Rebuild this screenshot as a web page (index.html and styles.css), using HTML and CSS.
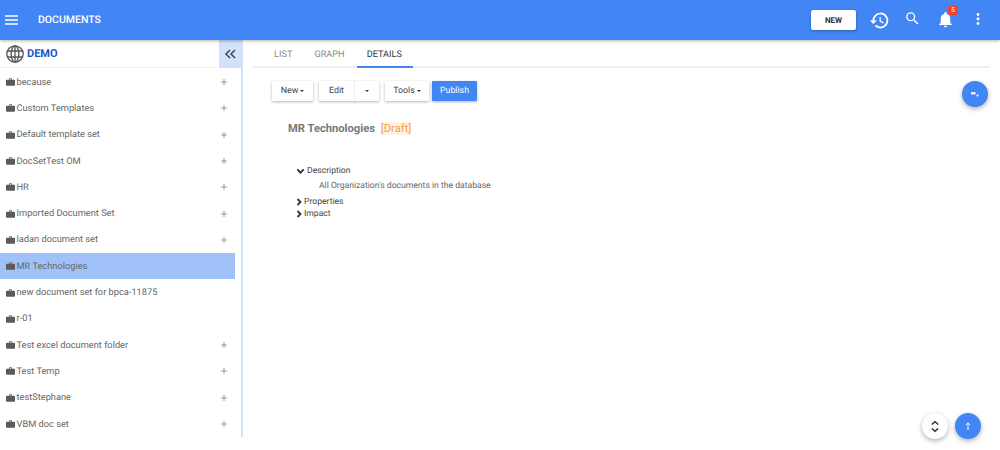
FILE: index.html
```html
<!DOCTYPE html>
<html lang="en">
<head>
<meta charset="utf-8">
<title>Documents</title>
<link rel="stylesheet" href="styles.css">
</head>
<body>
<svg class="defs" width="0" height="0" aria-hidden="true">
  <symbol id="case" viewBox="0 0 12 10"><path d="M4 2V1a1 1 0 0 1 1-1h2a1 1 0 0 1 1 1v1h3a1 1 0 0 1 1 1v6a1 1 0 0 1-1 1H1a1 1 0 0 1-1-1V3a1 1 0 0 1 1-1zM5 1v1h2V1z" fill="#5f5a55" fill-rule="evenodd"/></symbol>
  <symbol id="plus" viewBox="0 0 7 7"><path d="M3.5 0v7M0 3.5h7" stroke="#888" stroke-width="1" fill="none"/></symbol>
  <symbol id="chev" viewBox="0 0 8 10"><path d="M2 1l4 4-4 4" stroke="#333" stroke-width="2.400" fill="none"/></symbol>
</svg>
<header class="topbar">
  <svg class="menu" width="13" height="10" viewBox="0 0 13 10"><path d="M0 1h13M0 5h13M0 9h13" stroke="#fff" stroke-width="1.5"/></svg>
  <div class="title">DOCUMENTS</div>
  <button class="new-btn">NEW</button>
  <svg class="history" width="21" height="21" viewBox="0 0 24 24"><path fill="#fff" d="M13 3a9 9 0 0 0-9 9H1l3.9 3.9L9 12H6a7 7 0 1 1 2.05 4.95L6.64 18.36A9 9 0 1 0 13 3zm-1 5v5l4.25 2.52.77-1.28-3.52-2.09V8z"/></svg>
  <svg class="search" width="17" height="17" viewBox="0 0 24 24"><path fill="#fff" d="M15.5 14h-.79l-.28-.27A6.47 6.47 0 0 0 16 9.5 6.5 6.5 0 1 0 9.5 16c1.61 0 3.09-.59 4.23-1.57l.27.28v.79l5 4.99L20.49 19zm-6 0a4.5 4.5 0 1 1 0-9 4.5 4.5 0 0 1 0 9z"/></svg>
  <div class="bell">
    <svg width="19" height="19" viewBox="0 0 24 24"><path fill="#fff" d="M12 22c1.1 0 2-.9 2-2h-4c0 1.1.9 2 2 2zm6-6v-5c0-3.07-1.63-5.64-4.5-6.32V4a1.5 1.5 0 0 0-3 0v.68C7.64 5.36 6 7.92 6 11v5l-2 2v1h16v-1z"/></svg>
    <span class="badge">5</span>
  </div>
  <svg class="dots" width="4" height="12" viewBox="0 0 4 12"><circle cx="2" cy="1.5" r="1.4" fill="#fff"/><circle cx="2" cy="6" r="1.4" fill="#fff"/><circle cx="2" cy="10.5" r="1.4" fill="#fff"/></svg>
</header>
<div class="main">
  <aside class="sidebar">
    <div class="side-head">
      <div class="demo">
        <svg class="globe" width="18" height="18" viewBox="0 0 18 18"><g fill="none" stroke="#555" stroke-width="1.3"><circle cx="9" cy="9" r="8.2"/><ellipse cx="9" cy="9" rx="3.8" ry="8.2"/><path d="M9 .8v16.4M1.4 6h15.2M1.4 12h15.2"/></g></svg>
        <span>DEMO</span>
      </div>
      <div class="collapse"><svg width="12" height="10" viewBox="0 0 12 10"><path d="M6 1L2 5l4 4M11 1L7 5l4 4" stroke="#444" stroke-width="1.5" fill="none"/></svg></div>
    </div>
    <ul class="tree">
      <li class="row"><svg class="case"><use href="#case"/></svg><span class="name">because</span><svg class="plus"><use href="#plus"/></svg></li>
      <li class="row"><svg class="case"><use href="#case"/></svg><span class="name">Custom Templates</span><svg class="plus"><use href="#plus"/></svg></li>
      <li class="row"><svg class="case"><use href="#case"/></svg><span class="name">Default template set</span><svg class="plus"><use href="#plus"/></svg></li>
      <li class="row"><svg class="case"><use href="#case"/></svg><span class="name">DocSetTest OM</span><svg class="plus"><use href="#plus"/></svg></li>
      <li class="row"><svg class="case"><use href="#case"/></svg><span class="name">HR</span><svg class="plus"><use href="#plus"/></svg></li>
      <li class="row"><svg class="case"><use href="#case"/></svg><span class="name">Imported Document Set</span><svg class="plus"><use href="#plus"/></svg></li>
      <li class="row"><svg class="case"><use href="#case"/></svg><span class="name">ladan document set</span><svg class="plus"><use href="#plus"/></svg></li>
      <li class="row selected"><svg class="case"><use href="#case"/></svg><span class="name">MR Technologies</span></li>
      <li class="row"><svg class="case"><use href="#case"/></svg><span class="name">new document set for bpca-11875</span></li>
      <li class="row"><svg class="case"><use href="#case"/></svg><span class="name">r-01</span></li>
      <li class="row"><svg class="case"><use href="#case"/></svg><span class="name">Test excel document folder</span><svg class="plus"><use href="#plus"/></svg></li>
      <li class="row"><svg class="case"><use href="#case"/></svg><span class="name">Test Temp</span><svg class="plus"><use href="#plus"/></svg></li>
      <li class="row"><svg class="case"><use href="#case"/></svg><span class="name">testStephane</span><svg class="plus"><use href="#plus"/></svg></li>
      <li class="row"><svg class="case"><use href="#case"/></svg><span class="name">VBM doc set</span><svg class="plus"><use href="#plus"/></svg></li>
    </ul>
  </aside>
  <section class="content">
    <nav class="tabs">
      <span class="tab">LIST</span>
      <span class="tab">GRAPH</span>
      <span class="tab active">DETAILS</span>
    </nav>
    <div class="toolbar">
      <button class="btn btn-new">New<i class="caret"></i></button>
      <div class="btn split"><span class="part">Edit</span><span class="part arrow"><i class="caret"></i></span></div>
      <button class="btn btn-tools">Tools<i class="caret"></i></button>
      <button class="btn primary">Publish</button>
    </div>
    <h1 class="doc-title">MR Technologies <span class="draft">[Draft]</span></h1>
    <div class="sections">
      <div class="sec open"><svg class="chev down"><use href="#chev"/></svg>Description</div>
      <div class="sec-body">All Organization's documents in the database</div>
      <div class="sec"><svg class="chev"><use href="#chev"/></svg>Properties</div>
      <div class="sec"><svg class="chev"><use href="#chev"/></svg>Impact</div>
    </div>
  </section>
</div>
<button class="fab fab-top"><svg width="8" height="5" viewBox="0 0 8 5"><path d="M0 0h4.500v2.500H0zM5 3h1V2h.8v1H8v.8H6.800V5H6V3.800H5z" fill="#fff" fill-opacity=".85"/></svg></button>
<button class="fab fab-white"><svg width="8" height="13" viewBox="0 0 10 15"><path d="M1 5l4-3.500L9 5M1 10l4 3.500L9 10" stroke="#333" stroke-width="2" fill="none"/></svg></button>
<button class="fab fab-up"><svg width="6" height="8" viewBox="0 0 6 8"><path d="M3 8V1M.8 3L3 .8 5.200 3" stroke="#fff" fill="none"/></svg></button>
</body>
</html>
```
FILE: styles.css
```css
* { box-sizing: border-box; }
html, body { margin: 0; height: 100%; overflow: hidden; }
body { font-family: Roboto, "Liberation Sans", sans-serif; background: #fff; color: #555; position: relative; text-rendering: geometricPrecision; }
.defs { position: absolute; }
.topbar { height: 40px; background: #4285f4; display: flex; align-items: center; padding: 0 20px 0 5px; box-shadow: 0 1px 3px rgba(0,0,0,.3); position: relative; z-index: 2; }
.menu { flex: none; }
.title { color: #fff; font-weight: 500; font-size: 10.500px; margin-left: 20px; flex: 1; line-height: 1; }
.new-btn { width: 45px; height: 20px; background: #fff; border: 0; border-radius: 2px; font: 700 8px Roboto, sans-serif; text-rendering: geometricPrecision; color: #333; box-shadow: 0 1px 3px rgba(0,0,0,.3); margin-right: 13px; padding: 0; }
.history { margin-right: 14px; margin-top: 1px; }
.search { margin-right: 15px; margin-top: -3px; }
.bell { position: relative; width: 19px; height: 19px; margin-right: 21px; margin-top: -2px; }
.bell svg { display: block; }
.badge { position: absolute; top: -5px; right: -3px; width: 10px; height: 10px; border-radius: 2px; background: #f44336; color: #fff; font-size: 7px; line-height: 10px; text-align: center; }
.dots { margin-top: -2px; }
.main { display: flex; height: 397px; }
.sidebar { width: 243px; flex: none; border-right: 2px solid #d2e2fb; height: 397px; }
.side-head { height: 28px; display: flex; }
.demo { flex: 1; display: flex; align-items: center; gap: 3px; border-bottom: 1px solid #eee; padding-left: 6px; margin-right: 2px; color: #1a56c9; font-weight: 700; font-size: 11px; }
.collapse { width: 22px; height: 28px; background: #d2e2fb; display: flex; align-items: center; justify-content: center; }
.tree { list-style: none; margin: 0; padding: 1px 0 0; width: 234.500px; }
.row { height: 26.300px; display: flex; align-items: center; padding: 0 7px 0 6px; font-size: 9.250px; color: #666; }
.row.selected { background: #a0c2f9; }
.case { width: 9px; height: 8px; flex: none; margin-right: 1.500px; }
.name { flex: 1; white-space: nowrap; }
.plus { width: 6px; height: 6px; flex: none; margin-right: 1px; }
.content { flex: 1; padding-left: 10px; }
.tabs { display: flex; height: 28px; border-bottom: 2px solid #f0f0f0; margin-right: 10px; align-items: stretch; padding-left: 21px; font-size: 9.200px; color: #888; }
.tab { margin-right: 22px; display: flex; align-items: center; padding-top: 3px; }
.tab.active { color: #333; margin-left: -10px; padding: 3px 10px 0; width: 56px; border-bottom: 2px solid #4285f4; height: 28px; margin-right: 0; }
.toolbar { display: flex; gap: 6px; margin: 13px 0 0 19px; height: 20px; }
.btn { height: 20px; background: #fff; border: 0; border-radius: 1px; box-shadow: 0 1px 3px rgba(0,0,0,.3); font: 8.800px Roboto, sans-serif; text-rendering: geometricPrecision; color: #444; padding: 0; display: flex; align-items: center; justify-content: center; }
.btn-new { width: 41px; }
.btn-tools { width: 44px; }
.split { width: 60px; }
.part { flex: 1; height: 20px; display: flex; align-items: center; justify-content: center; }
.arrow { flex: none; width: 25px; border-left: 1px solid #eee; }
.caret { display: inline-block; border-left: 2.500px solid transparent; border-right: 2.500px solid transparent; border-top: 2.500px solid #333; margin-left: 2px; }
.arrow .caret { margin-left: 0; }
.primary { background: #4285f4; color: #fff; margin-left: -3px; width: 45px; }
.doc-title { margin: 21px 0 0 35px; font-size: 11.200px; font-weight: 700; color: #777; line-height: 14px; }
.draft { font-weight: 400; color: #f7a13e; background: #fff3e3; margin-left: 3px; }
.sections { margin: 28px 0 0 43px; font-size: 8.600px; color: #444; }
.sec { display: flex; align-items: center; height: 12px; line-height: 12px; }
.sec.open { height: 13px; margin-bottom: 3px; }
.sec-body { margin-left: 23px; color: #666; height: 13px; line-height: 13px; margin-bottom: 3px; }
.chev { width: 6px; height: 8px; margin-right: 2px; }
.chev.down { width: 9px; height: 8px; transform: rotate(90deg); margin-right: 2px; }
.fab { position: absolute; border: 0; border-radius: 50%; width: 26px; height: 26px; background: #4285f4; box-shadow: 0 2px 5px rgba(0,0,0,.3); display: flex; align-items: center; justify-content: center; padding: 0; }
.fab-top { left: 962px; top: 81px; }
.fab-white { left: 922px; top: 413px; background: #fff; }
.fab-up { left: 955px; top: 413px; }
```
